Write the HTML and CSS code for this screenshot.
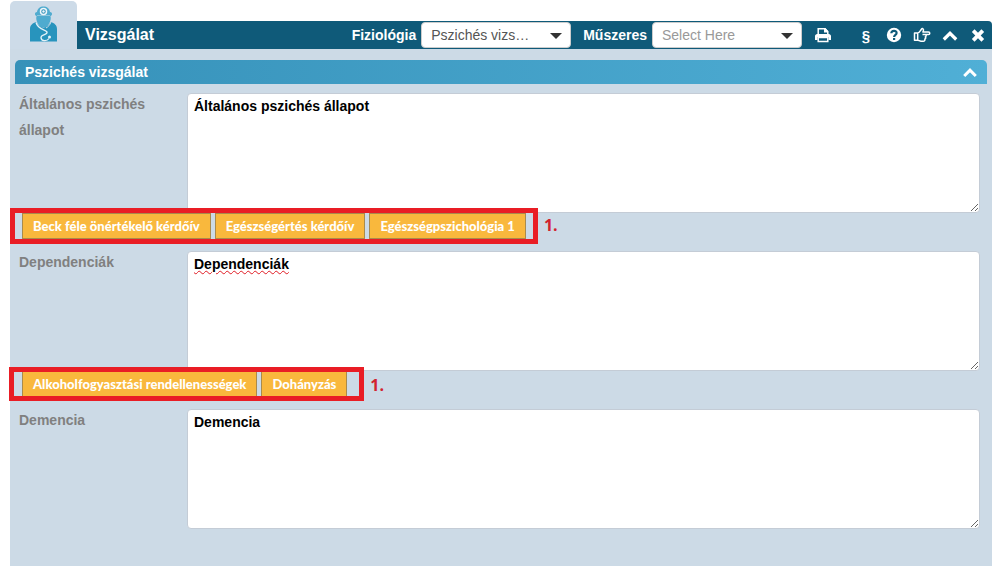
FILE: index.html
```html
<!DOCTYPE html>
<html lang="hu">
<head>
<meta charset="utf-8">
<title>Vizsgálat</title>
<link rel="stylesheet" href="styles.css">
</head>
<body>
<main class="panel">
  <header class="panel-head">
    <div class="tab">
      <svg class="doctor" viewBox="0 0 28 36" width="28" height="36" aria-hidden="true">
        <path fill="#4fabcf" d="M7 6C7.500 2.500 10 0.500 13.500 0.500S19.500 2.500 20 6c1.600 0 2 1 2 2s-.6 1.800-1.600 2c.3 1 .5 2 .3 3.200-.5 3.400-2.700 6.300-4.200 7.800h-6c-1.500-1.500-3.700-4.400-4.200-7.800C6.100 12 6.300 11 6.600 10 5.600 9.800 5 9 5 8s.4-2 2-2z"/>
        <path fill="none" stroke="#9ccbe0" stroke-width=".8" d="M7 9.500h13"/>
        <circle cx="13.500" cy="5.500" r="3" fill="#3292ba" stroke="#eef6fa" stroke-width="1.500"/>
        <circle cx="13.500" cy="5.500" r="1.200" fill="#eef6fa"/>
        <path fill="#2894bd" d="M6 16C3 17 0 19 0 23v12.500h27V23c0-4-3-6-6-7l-3 3.500c-2 2.500-7 2.500-9 0z"/>
        <path fill="none" stroke="#e4f2f8" stroke-width="1.300" d="M6 16.500c2 7 9 7 11 9.500 1 3-6 2-6 5.500 0 4 6 4 8 1"/>
        <path fill="none" stroke="#cddbe8" stroke-width="1" d="M21 16c-1 3-3 5-5 6"/>
        <circle cx="19.500" cy="31" r="1.500" fill="#e4f2f8"/>
      </svg>
    </div>
    <div class="bar">
      <h1 class="title">Vizsgálat</h1>
      <label class="bar-label" for="fiz">Fiziológia</label>
      <span class="picker"><select id="fiz"><option>Pszichés vizs…</option></select></span>
      <label class="bar-label" for="musz">Műszeres</label>
      <span class="picker"><select id="musz" class="empty"><option>Select Here</option></select></span>
      <div class="tools">
        <button class="tool print" aria-label="Nyomtatás"><svg viewBox="0 0 16 16" width="16" height="16"><path fill="none" stroke="#fff" stroke-width="1.500" d="M3.200 8V1.800h6.600l3 2.800V8M3.200 10.500v4h9.600v-4z"/><path fill="#fff" d="M2.200 7h11.600C15 7 16 8 16 9.200V13h-2.500v-3h-11v3H0V9.200C0 8 1 7 2.200 7zM9 1v4.500h4V4L10.500 1z"/></svg></button>
        <button class="tool para">§</button>
        <button class="tool" aria-label="Súgó"><svg viewBox="0 0 16 16" width="16" height="16"><circle cx="8" cy="8" r="7.200" fill="#fff"/><path fill="none" stroke="#0f5a79" stroke-width="2.200" d="M5.300 6.300C5.500 3.200 10.600 3.100 10.600 6c0 2-2.500 1.800-2.500 4"/><path fill="#0f5a79" d="M7 11h2.200v2H7z"/></svg></button>
        <button class="tool" aria-label="Ugrás"><svg viewBox="0 0 18 16" width="18" height="16"><path fill="none" stroke="#fff" stroke-width="1.500" stroke-linejoin="round" d="M1.500 6h3.200c1.500 0 2.300-1.800 3.700-3.800C9.600.7 11 2.300 10.300 4l-.4 1h5.600c1.700 0 1.700 2.500 0 2.500h-3c1 .6.900 2-.2 2.400.8.700.5 2-.5 2.200.4 1.300-.4 2.100-1.500 2.100H8c-1.500 0-2-1-3.500-1h-3zM4.700 6v7M12.500 7.500h-3"/></svg></button>
        <button class="tool" aria-label="Összecsukás"><svg viewBox="0 0 16 16" width="16" height="16"><path fill="none" stroke="#fff" stroke-width="3.200" d="M1.800 12.500L8 6.300l6.200 6.200"/></svg></button>
        <button class="tool" aria-label="Bezárás"><svg viewBox="0 0 16 16" width="16" height="16"><path stroke="#fff" stroke-width="3.800" d="M3.200 3.700l9.600 9.600M12.800 3.700l-9.600 9.600"/></svg></button>
      </div>
    </div>
  </header>
  <section class="section">
    <div class="section-head">
      <h2 class="section-title">Pszichés vizsgálat</h2>
      <button class="tool" aria-label="Szakasz összecsukása"><svg viewBox="0 0 16 16" width="16" height="16"><path fill="none" stroke="#fff" stroke-width="3" d="M2.200 12L8 6.200l5.800 5.800"/></svg></button>
    </div>
    <div class="field">
      <label class="field-label" for="f1">Általános pszichés állapot</label>
      <textarea id="f1" class="text" spellcheck="false">Általános pszichés állapot</textarea>
    </div>
    <div class="actions">
      <div class="group">
        <button class="action">Beck féle önértékelő kérdőív</button>
        <button class="action">Egészségértés kérdőív</button>
        <button class="action">Egészségpszichológia 1</button>
        <span class="frame"></span>
      </div>
      <span class="mark">1.</span>
    </div>
    <div class="field">
      <label class="field-label" for="f2">Dependenciák</label>
      <textarea id="f2" class="text misspelt" spellcheck="false">Dependenciák</textarea>
    </div>
    <div class="actions">
      <div class="group group-short">
        <button class="action">Alkoholfogyasztási rendellenességek</button>
        <button class="action">Dohányzás</button>
        <span class="frame"></span>
      </div>
      <span class="mark">1.</span>
    </div>
    <div class="field">
      <label class="field-label" for="f3">Demencia</label>
      <textarea id="f3" class="text" spellcheck="false">Demencia</textarea>
    </div>
  </section>
</main>
</body>
</html>
```
FILE: styles.css
```css
* { box-sizing: border-box; }
html { height: 100%; }
body {
  height: 100%;
  margin: 0;
  padding: 1px 11px 0 10px;
  background: #fff;
  font-family: "Liberation Sans", Arial, sans-serif;
  font-size: 14px;
}
button, select, textarea { font-family: inherit; font-size: inherit; margin: 0; }
h1, h2 { margin: 0; font-size: 14px; }

.panel { display: flex; flex-direction: column; min-height: 100%; }
.panel-head { display: flex; align-items: flex-end; }
.tab {
  width: 67px;
  height: 48px;
  padding: 5px 0 0 20px;
  background: #cddbe8;
  border-radius: 5px 5px 0 0;
}
.doctor { display: block; }
.bar {
  flex: 1;
  display: flex;
  align-items: center;
  height: 28px;
  padding: 0 4px 0 8px;
  background: #0f5a79;
  border-radius: 0 4px 0 0;
  color: #fff;
}
.title { flex: 1; font-size: 16px; line-height: 26px; }
.bar-label { font-weight: bold; margin: 0 5px 0 12px; }
.picker { position: relative; display: flex; }
.picker::after {
  content: "";
  position: absolute;
  right: 9px;
  top: 11px;
  border: 6px solid transparent;
  border-top-color: #333;
  border-bottom: 0;
  pointer-events: none;
}
.picker select {
  appearance: none;
  width: 150px;
  height: 26px;
  padding: 0 20px 0 9px;
  border: 1px solid #ccc;
  border-radius: 4px;
  background: #fff;
  color: #555;
}
.picker .empty { color: #999; }
.tools { display: flex; align-items: center; gap: 8px; margin-left: 11px; }
.tool {
  display: flex;
  align-items: center;
  justify-content: center;
  width: 20px;
  height: 24px;
  padding: 0;
  border: 0;
  background: none;
  color: #fff;
  font-size: 15px;
  font-weight: bold;
}
.print { margin-right: 15px; }

.section { flex: 1; padding: 11px 5px 20px; background: #ccdae6; }
.section-head {
  display: flex;
  align-items: center;
  justify-content: space-between;
  height: 24px;
  margin-bottom: 9px;
  padding: 0 7px 0 10px;
  border-radius: 5px 5px 0 0;
  background: linear-gradient(90deg, #3691b9, #50afd6);
  color: #fff;
}
.field { display: flex; padding: 0 7px 0 4px; }
.field-label {
  width: 168px;
  padding-right: 20px;
  margin-top: -2px;
  line-height: 26px;
  font-weight: bold;
  color: #808080;
}
.text {
  flex: 1;
  height: 120px;
  padding: 3px 6px;
  border: 1px solid #c4ccd6;
  border-radius: 4px;
  background: #fff;
  color: #000;
  font-weight: bold;
  line-height: 18px;
  resize: both;
}
.misspelt { text-decoration: underline wavy #e01b24 1px; text-underline-offset: 1px; }
.actions { display: flex; align-items: flex-start; height: 38px; padding-left: 7px; }
.group { position: relative; display: flex; gap: 4px; }
.action {
  height: 26px;
  padding: 0 10px;
  border: 1px solid #a98b4c;
  background: #f9b83d;
  color: #fff;
  font-family: Lato, "Noto Sans", sans-serif;
  font-size: 13px;
  font-weight: 900;
}
.frame {
  position: absolute;
  inset: -5px -12px;
  border: 5px solid #e91d25;
  pointer-events: none;
}
.group-short .frame { inset: -4px -17px -4px -13px; }
.mark {
  margin-left: 18px;
  color: #d2232f;
  font-family: "Open Sans", sans-serif;
  font-size: 16px;
  font-weight: bold;
  line-height: 24px;
}
.group-short + .mark { margin-left: 23px; line-height: 28px; }
```
